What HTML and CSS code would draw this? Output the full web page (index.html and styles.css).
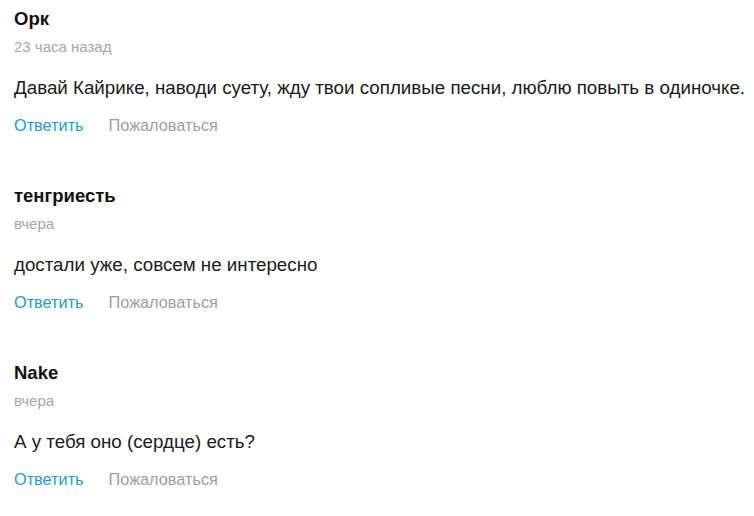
FILE: index.html
```html
<!DOCTYPE html>
<html lang="ru">
<head>
<meta charset="utf-8">
<link rel="stylesheet" href="styles.css">
</head>
<body>
<div class="comments">
  <div class="comment">
    <div class="author">Орк</div>
    <div class="date">23 часа назад</div>
    <div class="text">Давай Кайрике, наводи суету, жду твои сопливые песни, люблю повыть в одиночке.</div>
    <div class="actions"><a class="reply">Ответить</a><a class="report">Пожаловаться</a></div>
  </div>
  <div class="comment">
    <div class="author">тенгриесть</div>
    <div class="date">вчера</div>
    <div class="text">достали уже, совсем не интересно</div>
    <div class="actions"><a class="reply">Ответить</a><a class="report">Пожаловаться</a></div>
  </div>
  <div class="comment">
    <div class="author">Nake</div>
    <div class="date">вчера</div>
    <div class="text">А у тебя оно (сердце) есть?</div>
    <div class="actions"><a class="reply">Ответить</a><a class="report">Пожаловаться</a></div>
  </div>
</div>
</body>
</html>
```
FILE: styles.css
```css
html, body {
  margin: 0;
  padding: 0;
  background: #fff;
}
body {
  font-family: "Liberation Sans", Arial, sans-serif;
  color: #111;
}
.comments {
  padding: 7px 0 0 14px;
  display: flex;
  flex-direction: column;
  gap: 49px;
}
.author {
  font-weight: bold;
  font-size: 18.5px;
  line-height: 24px;
  color: #111;
}
.date {
  margin-top: 7px;
  font-size: 15px;
  line-height: 18px;
  color: #a6a6a6;
}
.text {
  margin-top: 20px;
  font-size: 18.75px;
  line-height: 24px;
  color: #1a1a1a;
  white-space: nowrap;
}
.actions {
  margin-top: 15px;
  display: flex;
  gap: 25px;
  font-size: 16.3px;
  line-height: 20px;
}
.reply {
  color: #1a9bd6;
}
.report {
  color: #9e9e9e;
}
```
